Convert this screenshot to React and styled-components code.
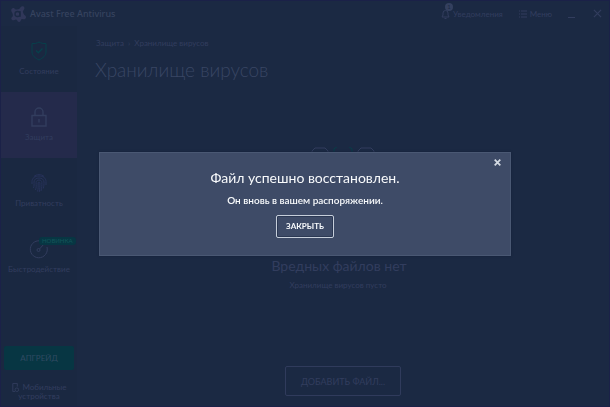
import React from "react";
import styled, { createGlobalStyle } from "styled-components";

const font = 'Lato, "Noto Sans", "Open Sans", sans-serif';

const GlobalStyle = createGlobalStyle`
  *, *::before, *::after { box-sizing: border-box; }
  body { margin: 0; background: #1b2943; font-family: ${font}; color: #323d5e; }
  button { font: inherit; color: inherit; background: none; border: 0; padding: 0; cursor: pointer; }
  a { color: inherit; text-decoration: none; }
  h1, h2, p { margin: 0; font-weight: 400; }
  svg { display: block; fill: none; stroke: currentColor; flex: none; }
`;

const Window = styled.div`
  min-height: 100vh;
  display: flex;
  flex-direction: column;
  border: 1px solid #1b2148;
`;

const TitleBar = styled.header`
  height: 25px;
  display: flex;
  align-items: center;
  padding: 0 7px 0 8px;
  font-size: 8px;
`;

const Brand = styled.div`
  display: flex;
  align-items: center;
  gap: 3px;
  margin-right: auto;
  font-family: "Noto Sans", sans-serif;
  font-size: 9px;
  font-weight: 500;
  color: #36435f;
`;

const HeaderButton = styled.button`
  display: flex;
  align-items: center;
  gap: 3px;
  margin-left: ${(p) => p.$space}px;
`;

const BellBox = styled.span`
  position: relative;
`;

const Badge = styled.span`
  position: absolute;
  top: -6px;
  left: 4px;
  width: 8px;
  height: 8px;
  border-radius: 50%;
  background: #34405f;
  color: #1b2943;
  font-size: 6px;
  line-height: 8px;
  text-align: center;
`;

const Body = styled.div`
  flex: 1;
  display: grid;
  grid-template-columns: 76px 1fr;
`;

const Sidebar = styled.nav`
  display: flex;
  flex-direction: column;
  background: #1a2841;
`;

const NavItem = styled.a`
  height: 66px;
  padding-top: 15px;
  display: flex;
  flex-direction: column;
  align-items: center;
  gap: 4px;
  font-size: 8px;
  line-height: 12px;
  background: ${(p) => (p.$active ? "#242a4b" : "transparent")};
`;

const IconBox = styled.span`
  position: relative;
  height: 20px;
  display: flex;
  align-items: center;
  color: ${(p) => p.$color || "inherit"};
`;

const NewTag = styled.span`
  position: absolute;
  top: -2px;
  left: 10px;
  padding: 0 3px;
  border-radius: 3px;
  background: #073643;
  color: #14565a;
  font-size: 6px;
  line-height: 8px;
`;

const SideFooter = styled.div`
  margin-top: auto;
  padding: 0 3px 5px;
  display: flex;
  flex-direction: column;
  gap: 13px;
`;

const UpgradeButton = styled.button`
  height: 24px;
  border-radius: 2px;
  background: #073643;
  color: #2f4a62;
  font-size: 8px;
`;

const MobileLink = styled.a`
  font-size: 8px;
  line-height: 9px;
  text-align: center;

  svg {
    display: inline-block;
    vertical-align: middle;
    height: 9px;
    margin-right: 2px;
  }
`;

const Main = styled.main`
  display: flex;
  flex-direction: column;
  padding: 11px 0 10px;
`;

const Breadcrumb = styled.nav`
  display: flex;
  gap: 4px;
  padding-left: 19px;
  font-size: 8px;
  line-height: 12px;
`;

const Title = styled.h1`
  padding-left: 18px;
  margin-top: 9px;
  font-size: 19px;
  line-height: 24px;
  font-weight: 300;
  color: #394664;
`;

const Empty = styled.section`
  flex: 1;
  display: flex;
  flex-direction: column;
  align-items: center;
  text-align: center;
  padding-top: 65px;
`;

const EmptyTitle = styled.h2`
  margin-top: 61px;
  padding-right: 8px;
  font-size: 14px;
  line-height: 20px;
`;

const EmptyText = styled.p`
  margin-top: 3px;
  padding-right: 10px;
  font-size: 8px;
  line-height: 12px;
`;

const AddButton = styled.button`
  margin-top: auto;
  width: 116px;
  height: 30px;
  border: 1px solid #303b5c;
  border-radius: 2px;
  font-size: 9px;
`;

const Overlay = styled.div`
  position: fixed;
  inset: 0;
  display: flex;
  align-items: center;
  justify-content: center;
`;

const Dialog = styled.section`
  position: relative;
  width: 90%;
  max-width: 412px;
  padding: 15px 20px 17px;
  display: flex;
  flex-direction: column;
  align-items: center;
  text-align: center;
  background: #3e4b67;
  border: 1px solid #4a5873;
  box-shadow: 0 0 2px #142039;
  color: #f8fafc;
`;

const DialogTitle = styled.h2`
  font-size: 14px;
  line-height: 20px;
`;

const DialogText = styled.p`
  margin-top: 6px;
  font-size: 10px;
  line-height: 12px;
  font-weight: 600;
`;

const DialogButton = styled.button`
  margin-top: 9px;
  width: 58px;
  height: 23px;
  border: 1px solid #c6ceda;
  border-radius: 2px;
  box-shadow: inset 0 0 0 1px #2b3853;
  font-size: 8px;
  font-weight: 700;
`;

const DialogClose = styled.button`
  position: absolute;
  top: 6px;
  right: 9px;
  color: #d3dae3;
`;

const Logo = () => (
  <svg width="18" height="18" viewBox="0 0 18 18" color="#343c60">
    <path
      d="M3 3.500c1-1 2.500-.5 3 .7 1.500.6 3.500.4 4.800-.6C11.300 2 12.500.8 14.200 1.300c1.500.6 1.700 2.600.5 3.600-.8.8-1 1.800-.5 2.900.6 1.400 1 2.200 2 2.800 1.400 1 1 3.200-.6 3.600-1 .2-1.900-.3-2.600-.2-.9.2-1 1-1.400 2-.5 1.200-2.300 1.300-3 .2-.5-.8-.7-1.500-1.600-1.700-1-.2-2 1.200-3.500.8-1.500-.5-1.600-2.300-.4-3.200 1-.7.8-1.900.6-3C3.500 7.300 1 5.800 3 3.500z"
      fill="#303759"
      stroke="none"
    />
    <circle cx="8.500" cy="9" r="2.500" stroke="#1b2943" strokeWidth="1.300" />
    <path d="M11 6v6" stroke="#1b2943" strokeWidth="1.300" />
  </svg>
);

const Bell = () => (
  <svg width="9" height="10" viewBox="0 0 9 10">
    <path d="M1 8h7L7 6V4a2.500 2.500 0 0 0-5 0v2zM3.500 9.500h2" />
  </svg>
);

const MenuIcon = () => (
  <svg width="8" height="8" viewBox="0 0 8 8">
    <path d="M0 1h1M2 1h6M0 4h1M2 4h6M0 7h1M2 7h6" />
  </svg>
);

const Cross = ({ size, weight }) => (
  <svg width={size} height={size} viewBox="0 0 8 8" strokeWidth={weight}>
    <path d="M.8.8l6.400 6.400M7.200.8L.8 7.200" />
  </svg>
);

const Shield = () => (
  <svg width="16" height="20" viewBox="0 0 16 20">
    <path d="M8 1c2 1.200 4 1.600 7 1.600V11c0 3.500-3 6-7 8-4-2-7-4.500-7-8V2.600C4 2.600 6 2.200 8 1z" />
    <path d="M5 9.500l2.300 2.300L11.500 7.500" strokeWidth="1.4" />
  </svg>
);

const Lock = () => (
  <svg width="16" height="20" viewBox="0 0 16 20" strokeWidth="1.4">
    <path d="M1 8.500h14V19H1zM4 8.500V5a4 4 0 0 1 8 0v3.500M8 12v3.500" />
  </svg>
);

const Fingerprint = () => (
  <svg width="16" height="20" viewBox="0 0 16 20">
    <path d="M3 3.500C5.500 1 10.500 1 13 3.500M1 11V8.500C1 5 4 3 8 3s7 2 7 5.500V12M2.500 15c.8-2 .5-4 .5-6 0-2.500 2.200-4 5-4s5 1.500 5 4c0 2.500 0 4-.8 6.500M4.500 17c1-2.500.6-5 .6-7.500C5.100 8 6.300 7 8 7s2.900 1 2.900 2.500c0 3 0 5-.9 8.500M6.500 18.500c.9-2.500.6-6 .6-8.500 0-1.200 1.800-1.200 1.800 0 0 3 .1 6-.7 9" />
  </svg>
);

const Gauge = () => (
  <svg width="20" height="20" viewBox="0 0 20 20">
    <path d="M14.500 3.200A8.500 8.500 0 1 0 18 8" />
    <circle cx="9.500" cy="11" r="1.500" />
    <path d="M10.500 10l4.500-5" />
  </svg>
);

const Phone = () => (
  <svg width="9" height="10" viewBox="0 0 9 10">
    <path d="M4 9.500H1.500v-9h5V4" />
    <circle cx="6" cy="7.500" r="2" />
  </svg>
);

const VaultArt = () => (
  <svg width="66" height="48" viewBox="0 0 66 48">
    <path d="M2 14V4l3-3h10l3 3v10M48 14V4l3-3h10l3 3v10" />
    <path d="M24 12V2l4-3h10l4 3v10" stroke="#073f49" />
  </svg>
);

const sections = [
  { label: "Состояние", icon: <Shield />, color: "#07404b" },
  { label: "Защита", icon: <Lock />, active: true },
  { label: "Приватность", icon: <Fingerprint />, color: "#27325a" },
  { label: "Быстродействие", icon: <Gauge />, tag: "НОВИНКА" },
];

export default function App() {
  return (
    <>
      <GlobalStyle />
      <Window>
        <TitleBar>
          <Brand>
            <Logo />
            Avast Free Antivirus
          </Brand>
          <HeaderButton $space={0}>
            <BellBox>
              <Bell />
              <Badge>1</Badge>
            </BellBox>
            Уведомления
          </HeaderButton>
          <HeaderButton $space={16}>
            <MenuIcon />
            Меню
          </HeaderButton>
          <HeaderButton $space={16} aria-label="Свернуть">
            <svg width="7" height="8" viewBox="0 0 7 8"><path d="M0 7.500h7" /></svg>
          </HeaderButton>
          <HeaderButton $space={18} aria-label="Закрыть окно">
            <Cross size={9} weight={1} />
          </HeaderButton>
        </TitleBar>
        <Body>
          <Sidebar>
            {sections.map((s) => (
              <NavItem key={s.label} href="#" $active={s.active}>
                <IconBox $color={s.color}>
                  {s.icon}
                  {s.tag && <NewTag>{s.tag}</NewTag>}
                </IconBox>
                {s.label}
              </NavItem>
            ))}
            <SideFooter>
              <UpgradeButton>АПГРЕЙД</UpgradeButton>
              <MobileLink href="#">
                <Phone />
                Мобильные
                <br />
                устройства
              </MobileLink>
            </SideFooter>
          </Sidebar>
          <Main>
            <Breadcrumb>
              <a href="#">Защита</a>
              <span>›</span>
              <span>Хранилище вирусов</span>
            </Breadcrumb>
            <Title>Хранилище вирусов</Title>
            <Empty>
              <VaultArt />
              <EmptyTitle>Вредных файлов нет</EmptyTitle>
              <EmptyText>Хранилище вирусов пусто</EmptyText>
              <AddButton>ДОБАВИТЬ ФАЙЛ...</AddButton>
            </Empty>
          </Main>
        </Body>
      </Window>
      <Overlay>
        <Dialog role="dialog" aria-labelledby="dialog-title">
          <DialogTitle id="dialog-title">Файл успешно восстановлен.</DialogTitle>
          <DialogText>Он вновь в вашем распоряжении.</DialogText>
          <DialogButton>ЗАКРЫТЬ</DialogButton>
          <DialogClose aria-label="Закрыть">
            <Cross size={7} weight={2} />
          </DialogClose>
        </Dialog>
      </Overlay>
    </>
  );
}
